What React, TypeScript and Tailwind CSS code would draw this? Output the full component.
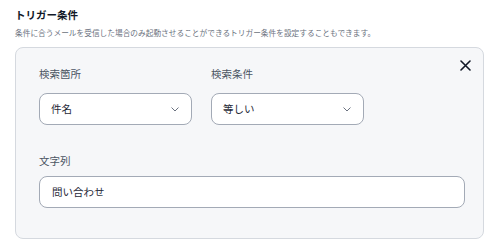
import React from "react";

const font = { fontFamily: '"Noto Sans CJK JP", "Noto Sans", sans-serif' };

function Chevron() {
  return (
    <svg width="8" height="5" viewBox="0 0 8 5" fill="none" className="shrink-0">
      <path d="M0.8 0.8 L4 4 L7.2 0.8" stroke="#6b7280" strokeWidth="1" strokeLinecap="round" strokeLinejoin="round" />
    </svg>
  );
}

function Select({ value }: { value: string }) {
  return (
    <div className="flex h-[32px] w-[153px] items-center justify-between rounded-[8px] border border-[#a3aab6] bg-white pl-[11px] pr-[12px] text-[10.5px] text-[#1f2937]">
      <span>{value}</span>
      <Chevron />
    </div>
  );
}

export default function App() {
  return (
    <div className="min-h-[249px] w-[499px] bg-white px-[15px] pt-[8px]" style={font}>
      <div className="text-[10.5px] font-bold leading-[14px] text-[#111827]">トリガー条件</div>
      <div className="mt-[6px] text-[7.7px] leading-[10px] text-[#6b7280]">
        条件に合うメールを受信した場合のみ起動させることができるトリガー条件を設定することもできます。
      </div>
      <div className="relative mt-[9px] h-[192px] rounded-[8px] border border-[#d5d9df] bg-[#f6f7f9] pl-[23px] pr-[18px] pt-[19px]">
        <button className="absolute right-[12px] top-[12px] flex h-[11px] w-[11px] items-center justify-center">
          <svg width="11" height="11" viewBox="0 0 11 11" fill="none">
            <path d="M1 1 L10 10 M10 1 L1 10" stroke="#111827" strokeWidth="1.6" strokeLinecap="round" />
          </svg>
        </button>
        <div className="flex gap-[19px]">
          <div className="flex flex-col">
            <div className="text-[10.5px] leading-[14px] text-[#4b5563]">検索箇所</div>
            <div className="mt-[12px]">
              <Select value="件名" />
            </div>
          </div>
          <div className="flex flex-col">
            <div className="text-[10.5px] leading-[14px] text-[#4b5563]">検索条件</div>
            <div className="mt-[12px]">
              <Select value="等しい" />
            </div>
          </div>
        </div>
        <div className="mt-[29px] text-[10.5px] leading-[14px] text-[#4b5563]">文字列</div>
        <div className="mt-[8px] flex h-[32px] items-center rounded-[8px] border border-[#a3aab6] bg-white pl-[12px] text-[10.5px] text-[#1f2937]">
          問い合わせ
        </div>
      </div>
    </div>
  );
}
